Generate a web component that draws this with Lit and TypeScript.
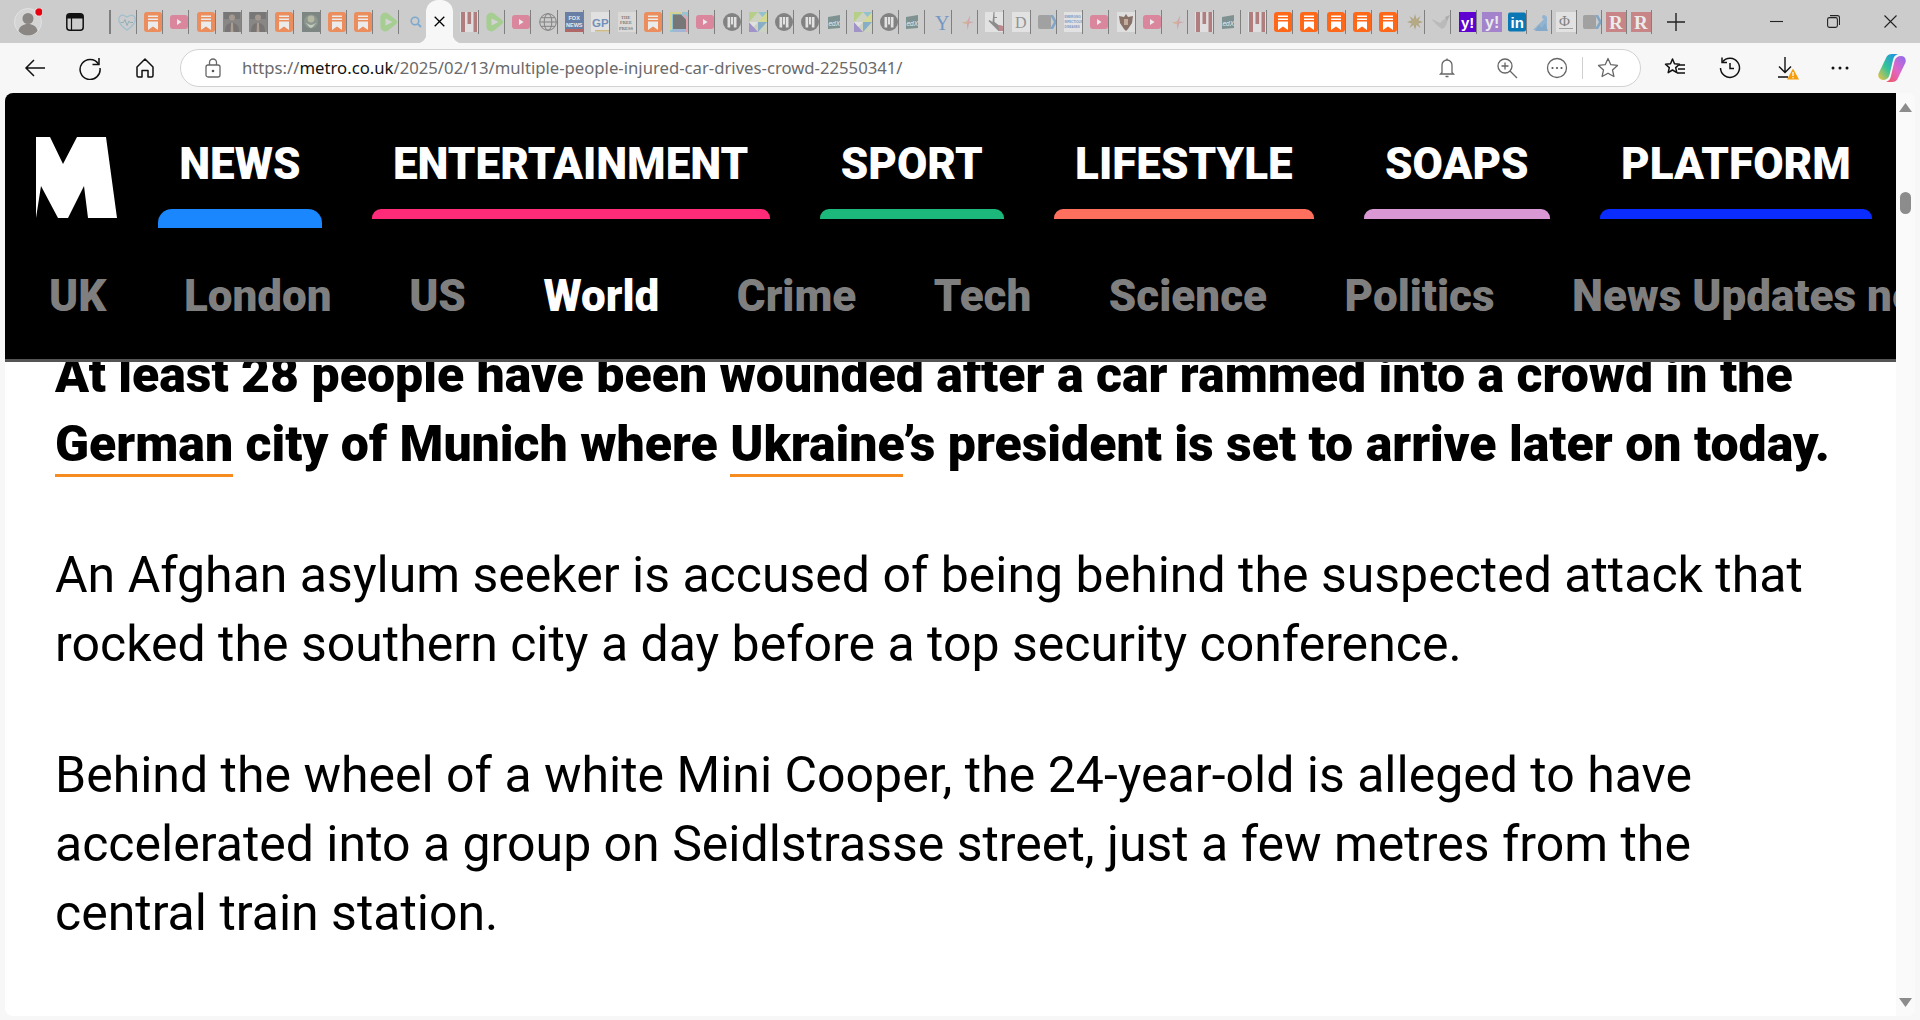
import { LitElement, html, svg, css } from "lit";
import { customElement } from "lit/decorators.js";

const bm = svg`<rect width="18" height="20" rx="3" fill="#ff6719"/><path d="M4 3.500h10v1.500H4zM4 6.500h10V8H4zM4 9.500h10V18l-5-3.500L4 18z" fill="#fff"/>`;
const yt = svg`<rect y="3" width="18" height="14" rx="3" fill="#e45c80"/><path d="M7 7l4.600 3L7 13z" fill="#fff"/>`;
const photo = svg`<rect width="18" height="20" fill="#5f5d5b"/><rect x="1" y="0" width="16" height="7" fill="#444"/><circle cx="9" cy="5.500" r="3" fill="#8d7a6c"/><path d="M2 20c0-7 3-9 7-9s7 2 7 9z" fill="#45413f"/><path d="M8 11h2l.4 9H7.600z" fill="#9a8270"/>`;
const seal = svg`<rect width="18" height="20" fill="#4d5c58"/><circle cx="9" cy="9.500" r="7" fill="#66766a"/><circle cx="9" cy="7" r="3.400" fill="#a8ad8a"/><path d="M3 11c3 1 3 4 6 5 3-1 3-4 6-5-2 0-4 2-6 2s-4-2-6-2z" fill="#c2cbb6"/>`;
const green = svg`<path d="M3 1.200c2-1 3-.8 5 .2l7.500 6c2.200 1.600 2.200 3.600 0 5.200L8 18.600c-2 1-3 1.200-5 .2-1.700-1-2.400-2-2.600-4V5.200C.6 3.200 1.300 2.200 3 1.200z" fill="#8fd070"/><path d="M5.500 6.400l7 3.600-7 3.600z" fill="#d8d8d8"/>`;
const pillars = svg`<rect width="18" height="20" fill="#ececec"/><path d="M1 0h4v20H1zM7.500 0h3.600v12H7.500zM13.500 0h3.500v20h-3.500z" fill="#a04f50"/>`;
const mc = svg`<circle cx="9" cy="10" r="9" fill="#555"/><path d="M4.500 5h2.700v10.500H4.500zM8 5h2v7.500H8zM10.800 5h2.700v10.500h-2.700z" fill="#eee"/>`;
const tri = svg`<rect width="18" height="20" fill="#d0d6bc"/><path d="M0 0h9L0 10z" fill="#a8d060"/><path d="M9 0h9v10z" fill="#70bcd0"/><path d="M18 0v10L9 10z" fill="#d8e070"/><path d="M0 10l9 10H0z" fill="#8870c8"/><path d="M9 10l9 0-9 10z" fill="#5f9cc4"/><path d="M0 10h9l-4.500 5z" fill="#eee"/>`;
const edx = svg`<path d="M0 5l12-2v13L0 17z" fill="#4f6f6f"/><text class="edx" x=".5" y="13.500">edX</text>`;
const star = svg`<path d="M11.500 3L10 9.500 15 10l-5 1.500L8.500 18 8 12 3 10.500l5-1z" fill="#d08a98"/><path d="M10 9.500L8 12 3 10.500z" fill="#dca868"/>`;
const arrow = svg`<rect y="3" width="13" height="14" rx="2" fill="#888"/><path d="M12 3h3l4 7-4 7h-3l4-7z" fill="#5590c4"/>`;

const ICONS: Record<string, unknown> = {
  heart: svg`<path d="M9 18C3 14 .5 11 .8 7 1 4 3.500 2.500 6 3.500l3 1.500 3-1.500c2.500-1 5 .5 5.200 3.500.3 4-2.200 7-8.200 11z" fill="none" stroke="#85b8d0" stroke-width="1.200"/><path d="M2.500 10.500h3l1.500-3 2 6 2-4.500 1 1.500h3" fill="none" stroke="#6f9cb0" stroke-width="1"/>`,
  bm, yt, photo, seal, green, pillars, mc, tri, edx, star, arrow,
  search: svg`<g transform="translate(2 1)"><circle cx="5" cy="8" r="3.800" fill="none" stroke="#4f94d0" stroke-width="1.600"/><path d="M8 11l3 3" stroke="#4f94d0" stroke-width="1.800"/></g>`,
  globe: svg`<g fill="none" stroke="#555" stroke-width="1"><circle cx="9" cy="10" r="8.300"/><ellipse cx="9" cy="10" rx="3.800" ry="8.300"/><path d="M1 10h16M2 5.700h14M2 14.300h14"/></g>`,
  fox: svg`<rect width="18" height="20" fill="#2b4f8c"/><rect y="17" width="18" height="3" fill="#a32a2a"/><text class="fox" x="3.500" y="7.500">FOX</text><text class="fox" x="1" y="14.500">NEWS</text>`,
  gp: svg`<rect width="18" height="20" fill="#eee"/><rect x="4" y="18" width="14" height="1.600" fill="#cdb060"/><text class="gp" x="1" y="14.500">GP</text>`,
  press: svg`<rect width="18" height="20" fill="#e6e4e0"/><text class="pr" x="3" y="6.500">THE</text><text class="pr" x="2" y="12">FREE</text><text class="pr" x="1" y="17.500">PRESS</text>`,
  doc: svg`<rect width="18" height="20" fill="#70c0d8"/><path d="M0 0h12v2H2v16H0z" fill="#d8d770"/><path d="M12 0l6 6v14h-3V7z" fill="#e890a0"/><rect y="17.500" x="3" width="13" height="2.500" fill="#8aa8d9"/><path d="M3 2.500h8l5 5V17H3z" fill="#444"/>`,
  Y: svg`<text class="y" x="2" y="18">Y</text>`,
  liberty: svg`<rect width="18" height="20" fill="#f0f0f0"/><path d="M8.500 0h1v5h2.500v1h-2.500v4l4 3 4 1v5h-4l-4-4-6-6 1-1 3 2z" fill="#666"/><path d="M13 13l5 1v5h-4z" fill="#b06068"/>`,
  D: svg`<rect width="18" height="20" fill="#f0f0f0"/><text class="d" x="3" y="16">D</text>`,
  eid: svg`<rect width="18" height="20" fill="#f0f0f0"/><text class="ei" x=".5" y="6">EMERGING</text><text class="ei" x=".5" y="11">INFECTIOUS</text><text class="ei" x=".5" y="16">DISEASES</text>`,
  eagle: svg`<rect width="18" height="20" fill="#ececec"/><path d="M9 2l2 3 5-1-1 7-4 6-2 2-2-2-4-6-1-7 5 1z" fill="#5f3a2a"/><rect x="7" y="7" width="4" height="6" fill="#c09880"/>`,
  sun: svg`<path d="M9 2l1.400 5.200L14.600 4l-2.400 4.400L17 10l-4.800 1.600L14.600 16l-4.200-3.200L9 18l-1.400-5.200L3.400 16l2.400-4.400L1 10l4.800-1.600L3.400 4l4.200 3.200z" fill="#a08a50"/><circle cx="9" cy="10" r="3.500" fill="#a8965c"/>`,
  bird: svg`<path d="M0 7l8 4 3-3 5-3-1 6-2 4-3 2-4-3-3-3-2-2z" fill="#b0b0b0"/><path d="M13 5l5-2-3 6z" fill="#999"/>`,
  yahoo: svg`<rect x="1" width="17" height="20" fill="#5f01d1"/><text class="ya" x="3" y="15.500">y!</text>`,
  yahoo2: svg`<rect width="20" height="20" fill="#8a58cc"/><text class="ya2" x="3" y="15.500">y!</text>`,
  linkedin: svg`<rect width="18" height="19" y=".5" rx="2" fill="#0a77b5"/><text class="li" x="2.500" y="15.500">in</text>`,
  people: svg`<path d="M14 4v14H0z" fill="#6fa6d4"/><circle cx="11" cy="5" r="2" fill="#6fa6d4"/><path d="M2 19l4-6 3 3 3-5 3 8z" fill="#5a96c8"/>`,
  phi: svg`<rect width="20" height="20" fill="#f0f0f0"/><text class="ph" x="3" y="14">Φ</text><rect x="3" y="16" width="14" height="1" fill="#888"/>`,
  r: svg`<rect width="20" height="20" fill="#c45a5e"/><text class="r" x="3" y="17">R</text>`,
};

const FAVS: string[] = [
  "heart", "bm", "yt", "bm", "photo", "photo", "bm", "seal", "bm", "bm", "green", "search", "TAB",
  "pillars", "green", "yt", "globe", "fox", "gp", "press", "bm", "doc", "yt", "mc", "tri", "mc", "mc",
  "edx", "tri", "mc", "edx", "Y", "star", "liberty", "D", "arrow", "eid", "yt", "eagle", "yt", "star",
  "pillars", "edx", "pillars", "obm", "obm", "obm", "obm", "obm", "sun", "bird", "yahoo",
];
const NARROW: string[] = ["yahoo2", "linkedin", "people", "phi", "arrow", "r", "r"];
const SOLID = new Set(["obm", "yahoo", "linkedin"]);

const NAV = [
  { label: "NEWS", color: "#1a87ff", active: true },
  { label: "ENTERTAINMENT", color: "#ff2a78" },
  { label: "SPORT", color: "#1cb87b" },
  { label: "LIFESTYLE", color: "#ff6f5e" },
  { label: "SOAPS", color: "#d998d4" },
  { label: "PLATFORM", color: "#0a2cff" },
];
const SUB = ["UK", "London", "US", "World", "Crime", "Tech", "Science", "Politics", "News Updates news"];

@customElement("app-root")
export class AppRoot extends LitElement {
  static styles = css`
    :host { display: block; height: 1020px; width: 1920px; overflow: hidden; background: #f7f7f7; font-family: Roboto, sans-serif; }
    .strip { height: 43px; background: #cccccc; display: flex; align-items: center; }
    .avatar { margin-left: 14px; width: 28px; height: 28px; }
    .panel { margin-left: 24px; width: 18px; height: 18px; margin-right: 25px; }
    .startsep { width: 1.5px; height: 24px; background: #7f7f7f; }
    .fav { width: 26.27px; height: 24px; flex: none; box-sizing: border-box; border-right: 1.5px solid #7f7f7f; display: flex; justify-content: flex-end; align-items: center; }
    .fav.n { width: 25px; }
    .fav.plain { border-right: none; }
    .fav svg { width: 18px; height: 20px; overflow: hidden; }
    .fav.wide svg { width: 20px; }
    .fade svg { opacity: 0.62; }
    .tab { width: 27px; height: 43px; flex: none; align-self: flex-end; background: #f7f7f7; border-radius: 12px 12px 0 0; display: flex; align-items: center; justify-content: center; position: relative; }
    .tab::before, .tab::after { content: ""; position: absolute; bottom: 0; width: 9px; height: 9px; }
    .tab::before { left: -9px; background: radial-gradient(circle at 0 0, transparent 9px, #f7f7f7 9.5px); }
    .tab::after { right: -9px; background: radial-gradient(circle at 100% 0, transparent 9px, #f7f7f7 9.5px); }
    .tab svg { width: 11px; height: 11px; }
    .plus { margin-left: 15px; width: 18px; height: 18px; }
    .winctl { margin-left: auto; display: flex; align-items: center; gap: 44px; margin-right: 23px; }
    .winctl svg { width: 13px; height: 13px; display: block; }

    .toolbar { height: 50px; background: #f7f7f7; display: flex; align-items: center; box-sizing: border-box; padding-left: 23px; }
    .toolbar svg { display: block; flex: none; }
    .nv { width: 24px; height: 24px; margin-right: 31px; }
    .url { margin-left: -8px; width: 1461px; height: 38px; box-sizing: border-box; background: #fff; border: 1.5px solid #d2d2d2; border-radius: 19px; display: flex; align-items: center; padding-left: 24px; margin-top: -1px; }
    .lock { width: 16px; height: 20px; margin-right: 21px; }
    .addr { font-family: "Noto Sans", sans-serif; font-size: 16.7px; color: #6a6a6a; white-space: nowrap; flex: 1; }
    .addr b { font-weight: 400; color: #111; }
    .ui { width: 22px; height: 22px; }
    .urlicons { display: flex; align-items: center; margin-right: 21px; }
    .vsep { width: 1px; height: 22px; background: #d0d0d0; margin: 0 14px 0 14px; }
    .right { display: flex; align-items: center; margin-left: 22px; }
    .right svg { width: 24px; height: 24px; }

    .page { height: 923px; margin: 0 5px 4px 5px; display: flex; background: #fff; border-radius: 8px; overflow: hidden; }
    .main { flex: 1; min-width: 0; display: flex; flex-direction: column; }
    .head { background: #000; height: 269px; flex: none; box-sizing: border-box; border-bottom: 3px solid #555; overflow: hidden; }
    .prim { display: flex; align-items: flex-start; height: 135px; padding-left: 31px; }
    .logo { width: 81px; height: 81px; margin-top: 44px; margin-right: 41px; flex: none; display: block; }
    .items { display: flex; gap: 50px; }
    .item { padding: 45px 0 0 0; display: flex; flex-direction: column; }
    .item span { padding: 0 21.2px; font-size: 44px; line-height: 52px; font-weight: 870; color: #fff; white-space: nowrap; }
    .bar { height: 10px; margin-top: 19px; border-radius: 9px 9px 0 0; }
    .bar.on { height: 19px; border-radius: 14px 14px 0 0; }
    .sub { display: flex; gap: 77.5px; padding: 43px 0 0 44px; white-space: nowrap; font-size: 44px; line-height: 50px; font-weight: 870; color: #7f7f7f; }
    .sub .cur { color: #fff; }

    .article { flex: 1; overflow: hidden; padding-left: 50px; font-size: 50px; line-height: 69px; color: #000; }
    .article p { margin: 0 0 62px; white-space: nowrap; }
    .article p.lead { margin-top: -21px; font-weight: 870; }
    .article a { color: inherit; text-decoration: none; border-bottom: 3px solid #f68b1f; padding-bottom: 1px; }

    .scroll { width: 19px; flex: none; background: #fafafa; display: flex; flex-direction: column; align-items: center; padding-top: 10px; box-sizing: border-box; }
    .scroll .thumb { width: 11px; height: 22px; border-radius: 6px; background: #8c8c8c; margin-top: 80px; }
    .scroll svg { width: 13px; height: 9px; display: block; }
    .scroll .down { margin-top: auto; margin-bottom: 9px; }

    text { font-family: "Liberation Sans", sans-serif; }
    .edx { font-size: 6.5px; fill: #fff; font-style: italic; }
    .fox { font-size: 5.5px; fill: #fff; font-weight: 700; }
    .gp { font-size: 11.5px; fill: #3a6cb0; font-weight: 700; }
    .pr { font-size: 4.5px; fill: #444; font-weight: 700; font-family: "Liberation Serif", serif; }
    .y { font-size: 20px; fill: #3d78c0; font-family: "Liberation Serif", serif; }
    .d { font-size: 16px; fill: #707070; font-family: "Liberation Serif", serif; }
    .ei { font-size: 3px; fill: #4a78c0; font-weight: 700; }
    .ya { font-size: 15px; fill: #fff; font-weight: 700; }
    .ya2 { font-size: 16px; fill: #fff; font-weight: 700; }
    .li { font-size: 15px; fill: #fff; font-weight: 700; }
    .ph { font-size: 15px; fill: #555; font-family: "Liberation Serif", serif; }
    .r { font-size: 19px; fill: #fff; font-weight: 700; font-family: "Liberation Serif", serif; }
  `;

  private favCell(kind: string, narrow = false) {
    if (kind === "TAB") {
      return html`<div class="tab"><svg viewBox="0 0 11 11"><path d="M.7.7l9.6 9.6M10.3.7L.7 10.3" stroke="#000" stroke-width="1.3" fill="none"/></svg></div>`;
    }
    const key = kind === "obm" ? "bm" : kind;
    const classes = ["fav"];
    if (narrow) classes.push("n");
    if (!SOLID.has(kind)) classes.push("fade");
    if (kind === "search" || kind === "yahoo2") classes.push("plain");
    if (kind === "yahoo2" || kind === "phi" || kind === "r") classes.push("wide");
    const vb = classes.includes("wide") ? "0 0 20 20" : "0 0 18 20";
    return html`<div class=${classes.join(" ")}><svg viewBox=${vb}>${ICONS[key]}</svg></div>`;
  }

  render() {
    return html`
      <div class="strip">
        <svg class="avatar" viewBox="0 0 28 28">
          <circle cx="14" cy="14" r="13.5" fill="#d4d4d4" stroke="#e2e2e2"/>
          <circle cx="14" cy="10.5" r="5.5" fill="#8a8683"/>
          <path d="M4.5 23c1-5 5-7 9.500-7s8.500 2 9.500 7c-2.500 3-6 4.500-9.500 4.500S7 26 4.500 23z" fill="#8a8683"/>
          <circle cx="25" cy="4" r="4.2" fill="#e8000f" stroke="#efefef" stroke-width="1"/>
        </svg>
        <svg class="panel" viewBox="0 0 18 18">
          <rect x=".8" y=".8" width="16.400" height="16.400" rx="3" fill="none" stroke="#111" stroke-width="1.500"/>
          <path d="M1 4c0-2 1-3 3-3h10c2 0 3 1 3 3v1.500H1z" fill="#111"/>
          <path d="M5.500 5v12" stroke="#111" stroke-width="1.200"/>
        </svg>
        <div class="startsep"></div>
        ${FAVS.map((f) => this.favCell(f))}
        ${NARROW.map((f) => this.favCell(f, true))}
        <svg class="plus" viewBox="0 0 18 18"><path d="M9 0v18M0 9h18" stroke="#222" stroke-width="1.400"/></svg>
        <div class="winctl">
          <svg viewBox="0 0 13 13"><path d="M0 6.500h13" stroke="#222" stroke-width="1.100"/></svg>
          <svg viewBox="0 0 13 13"><rect x=".6" y="2.600" width="9.800" height="9.800" rx="1.800" fill="none" stroke="#222" stroke-width="1.100"/><path d="M3 .6h7.500c1.200 0 2 .8 2 2V10" fill="none" stroke="#222" stroke-width="1.100"/></svg>
          <svg viewBox="0 0 13 13"><path d="M.5.500l12 12M12.500.500l-12 12" stroke="#222" stroke-width="1.100"/></svg>
        </div>
      </div>
      <div class="toolbar">
        <svg class="nv" viewBox="0 0 24 24"><path d="M22 12H3M11 4l-8 8 8 8" fill="none" stroke="#111" stroke-width="1.500"/></svg>
        <svg class="nv" viewBox="0 0 24 24"><path d="M20.500 8A10 10 0 1 0 22 12" fill="none" stroke="#111" stroke-width="1.500"/><path d="M21 2v6.500h-6.500" fill="none" stroke="#111" stroke-width="1.500"/></svg>
        <svg class="nv" viewBox="0 0 24 24"><path d="M4 11l8-8 8 8v8.500c0 1-.8 1.500-1.500 1.500H15v-6.500H9V21H5.500C4.800 21 4 20.500 4 19.500z" fill="none" stroke="#111" stroke-width="1.500" stroke-linejoin="round"/></svg>
        <div class="url">
          <svg class="lock" viewBox="0 0 16 20"><rect x="1" y="7" width="14" height="12" rx="2" fill="none" stroke="#666" stroke-width="1.300"/><path d="M4.500 7V4.500a3.500 3.500 0 0 1 7 0V7" fill="none" stroke="#666" stroke-width="1.300"/><circle cx="8" cy="13" r="1.300" fill="#555"/></svg>
          <div class="addr">https://<b>metro.co.uk</b>/2025/02/13/multiple-people-injured-car-drives-crowd-22550341/</div>
          <div class="urlicons">
            <svg class="ui" style="margin-right:38px" viewBox="0 0 22 22"><path d="M6 15.500V8a5 5 0 0 1 10 0v7.500l1.500 1.500h-13zM9.500 19.500h3" fill="none" stroke="#666" stroke-width="1.300"/><path d="M11 1.500v1.500" stroke="#666" stroke-width="1.300"/></svg>
            <svg class="ui" style="margin-right:28px" viewBox="0 0 22 22"><circle cx="9" cy="9" r="7" fill="none" stroke="#666" stroke-width="1.300"/><path d="M14 14l7 7M9 5.500v7M5.500 9h7" fill="none" stroke="#666" stroke-width="1.300"/></svg>
            <svg class="ui" viewBox="0 0 22 22"><circle cx="11" cy="11" r="9.500" fill="none" stroke="#666" stroke-width="1.300"/><circle cx="6.500" cy="11" r="1.100" fill="#555"/><circle cx="11" cy="11" r="1.100" fill="#555"/><circle cx="15.500" cy="11" r="1.100" fill="#555"/></svg>
            <div class="vsep"></div>
            <svg class="ui" viewBox="0 0 22 22"><path d="M11 1.500l2.800 6.200 6.700.7-5 4.500 1.400 6.600L11 16.200l-5.900 3.300 1.400-6.600-5-4.500 6.700-.7z" fill="none" stroke="#666" stroke-width="1.300" stroke-linejoin="round"/></svg>
          </div>
        </div>
        <div class="right">
          <svg viewBox="0 0 24 24" style="margin-right:31px"><path d="M9.500 3l2 4.700 5 .5-3.800 3.400 1.100 5L9.500 14l-4.300 2.600 1.100-5L2.500 8.200l5-.5z" fill="none" stroke="#111" stroke-width="1.500" stroke-linejoin="round"/><path d="M16 9h6M15 13h7M14 17h8" stroke="#111" stroke-width="1.400"/></svg>
          <svg viewBox="0 0 24 24" style="margin-right:33px"><path d="M4.500 6A9.500 9.500 0 1 1 2.500 12" fill="none" stroke="#111" stroke-width="1.500"/><path d="M4 1.500V6.500h5M12 7v5.500h4" fill="none" stroke="#111" stroke-width="1.500"/></svg>
          <svg viewBox="0 0 24 24" style="margin-right:29px;overflow:visible"><path d="M10 1v15M4 10.500l6 6 6-6M3 21h10" fill="none" stroke="#111" stroke-width="1.400"/><path d="M18 12.500l6 11H12z" fill="#f59e0b"/><path d="M18 16v4" stroke="#fff" stroke-width="1.300"/><circle cx="18" cy="21.800" r=".7" fill="#fff"/></svg>
          <svg viewBox="0 0 24 24" style="margin-right:26px"><circle cx="5" cy="12" r="1.500" fill="#111"/><circle cx="12" cy="12" r="1.500" fill="#111"/><circle cx="19" cy="12" r="1.500" fill="#111"/></svg>
          <svg viewBox="0 0 28 28" style="width:28px;height:28px">
            <defs>
              <linearGradient id="c1" x1="0" y1="1" x2="1" y2="0"><stop offset="0" stop-color="#f6c23d"/><stop offset=".45" stop-color="#35c39a"/><stop offset="1" stop-color="#1d8bf0"/></linearGradient>
              <linearGradient id="c2" x1="0" y1="1" x2="1" y2="0"><stop offset="0" stop-color="#f2555a"/><stop offset=".5" stop-color="#e067c6"/><stop offset="1" stop-color="#8b6cf0"/></linearGradient>
            </defs>
            <path d="M8 4C9 1.500 11 0 14 0H20C17 1 15.500 3 15 6L11.500 21C10.500 24.500 8 26 5 26 1.500 26-.5 23 .5 19.500z" fill="url(#c1)"/>
            <path d="M20 24C19 26.500 17 28 14 28H8C11 27 12.500 25 13 22L16.500 7C17.500 3.500 20 2 23 2 26.500 2 28.500 5 27.500 8.500z" fill="url(#c2)"/>
          </svg>
        </div>
      </div>
      <div class="page">
        <div class="main">
          <div class="head">
            <div class="prim">
              <svg class="logo" viewBox="0 0 81 81"><polygon fill="#fff" points="0,0 14,0 27,27 41,0 70,0 81,81 52,81 48,49 32,81 22,81 5,49 0,81"/></svg>
              <div class="items">
                ${NAV.map((n) => html`<div class="item"><span>${n.label}</span><div class="bar ${n.active ? "on" : ""}" style="background:${n.color}"></div></div>`)}
              </div>
            </div>
            <div class="sub">
              ${SUB.map((s) => html`<div class=${s === "World" ? "cur" : ""}>${s}</div>`)}
            </div>
          </div>
          <div class="article">
            <p class="lead">At least 28 people have been wounded after a car rammed into a crowd in the<br><a>German</a> city of Munich where <a>Ukraine</a>’s president is set to arrive later on today.</p>
            <p>An Afghan asylum seeker is accused of being behind the suspected attack that<br>rocked the southern city a day before a top security conference.</p>
            <p>Behind the wheel of a white Mini Cooper, the 24-year-old is alleged to have<br>accelerated into a group on Seidlstrasse street, just a few metres from the<br>central train station.</p>
          </div>
        </div>
        <div class="scroll">
          <svg viewBox="0 0 13 9"><path d="M6.500 0L13 9H0z" fill="#8c8c8c"/></svg>
          <div class="thumb"></div>
          <svg class="down" viewBox="0 0 13 9"><path d="M6.500 9L0 0h13z" fill="#8c8c8c"/></svg>
        </div>
      </div>
    `;
  }
}
